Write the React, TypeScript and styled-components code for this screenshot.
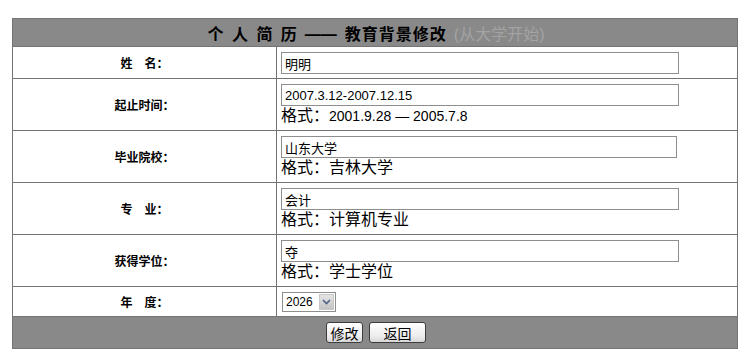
import styled, { createGlobalStyle } from 'styled-components'

const GlobalStyle = createGlobalStyle`
  body {
    margin: 0;
    background: #ffffff;
    font-family: "Liberation Sans", "Noto Sans CJK SC", sans-serif;
  }
`

const Page = styled.div`
  padding: 18px 0 0 12px;
`

const Table = styled.table`
  width: 726px;
  border-collapse: collapse;
  border: 1px solid #747474;
`

const HeadCell = styled.th`
  height: 27px;
  padding: 0 0 0 2px;
  background: #898989;
  border: 1px solid #747474;
  font-size: 16px;
  font-weight: bold;
  color: #000;
  text-align: center;
  letter-spacing: 1px;
  word-spacing: 2px;
  white-space: pre;
`

const Dash = styled.span`
  margin: 0 8px 0 7px;
  letter-spacing: 0;
`

const SubTitle = styled.span`
  color: #a3a3a3;
  font-weight: normal;
  margin-left: 7px;
  letter-spacing: 0;
`

const Label = styled.td`
  width: 263px;
  padding: 0;
  border: 1px solid #747474;
  text-align: center;
  font-size: 12px;
  font-weight: bold;
  color: #000;
`

const Field = styled.td`
  padding: 5px 4px 4px 4px;
  border: 1px solid #747474;
  vertical-align: top;
`

const TextInput = styled.input<{ $w: number }>`
  display: block;
  box-sizing: border-box;
  width: ${p => p.$w}px;
  height: 22px;
  margin: 0;
  padding: 0 3px;
  border: 1px solid #8e8e8e;
  font-family: "Liberation Sans", "Noto Sans CJK SC", sans-serif;
  font-size: 13px;
  color: #000;
  outline: none;
`

const Hint = styled.div`
  font-size: 16px;
  line-height: 20px;
  color: #000;
  white-space: nowrap;
`

const HintNum = styled.span`
  font-size: 14px;
`

const SelectWrap = styled.div`
  position: relative;
  display: inline-block;
  width: 54px;
  height: 20px;
  margin-left: 1px;
`

const YearSelect = styled.select`
  appearance: none;
  box-sizing: border-box;
  width: 54px;
  height: 20px;
  margin: 0;
  padding: 0 0 0 3px;
  border: 1px solid #8e8e8e;
  background: #fff;
  font-family: "Liberation Sans", sans-serif;
  font-size: 12px;
  color: #000;
`

const Arrow = styled.span`
  position: absolute;
  top: 2px;
  right: 2px;
  width: 15px;
  height: 16px;
  background: linear-gradient(#e4e4e4, #c4c4c4);
  border: 1px solid #c8c8c8;
  box-sizing: border-box;
  display: flex;
  align-items: center;
  justify-content: center;
  pointer-events: none;
`

const FootCell = styled.td`
  height: 31px;
  padding: 0 0 0 2px;
  background: #898989;
  border: 1px solid #747474;
`

const Buttons = styled.div`
  display: flex;
  justify-content: center;
  gap: 6px;
`

const Button = styled.button<{ $w: number }>`
  box-sizing: border-box;
  width: ${p => p.$w}px;
  height: 21px;
  padding: 0;
  border: 1px solid #3c3c3c;
  border-radius: 3px;
  background: linear-gradient(#ffffff, #ececec 70%, #d6d6d6);
  font-family: "Noto Sans CJK SC", sans-serif;
  font-size: 14px;
  line-height: 18px;
  color: #000;
`

const rows = [
  { label: '起止时间：', value: '2007.3.12-2007.12.15', hint: '2001.9.28 — 2005.7.8', num: true, w: 398 },
  { label: '毕业院校：', value: '山东大学', hint: '吉林大学', num: false, w: 396 },
  { label: '专　业：', value: '会计', hint: '计算机专业', num: false, w: 398 },
  { label: '获得学位：', value: '夺', hint: '学士学位', num: false, w: 398 },
]

export default function App() {
  return (
    <Page>
      <GlobalStyle />
      <Table>
        <tbody>
          <tr>
            <HeadCell colSpan={2}>
              个 人 简 历<Dash>——</Dash>教育背景修改<SubTitle>(从大学开始)</SubTitle>
            </HeadCell>
          </tr>
          <tr>
            <Label>姓　名：</Label>
            <Field>
              <TextInput $w={398} defaultValue="明明" />
            </Field>
          </tr>
          {rows.map(r => (
            <tr key={r.label}>
              <Label>{r.label}</Label>
              <Field>
                <TextInput $w={r.w} defaultValue={r.value} />
                <Hint>
                  格式：{r.num ? <HintNum>{r.hint}</HintNum> : r.hint}
                </Hint>
              </Field>
            </tr>
          ))}
          <tr>
            <Label>年　度：</Label>
            <Field>
              <SelectWrap>
                <YearSelect defaultValue="2026">
                  <option value="2026">2026</option>
                </YearSelect>
                <Arrow>
                  <svg width="9" height="6" viewBox="0 0 9 6">
                    <path d="M1 1 L4.5 4.5 L8 1" stroke="#4d6185" strokeWidth="1.6" fill="none" />
                  </svg>
                </Arrow>
              </SelectWrap>
            </Field>
          </tr>
          <tr>
            <FootCell colSpan={2}>
              <Buttons>
                <Button $w={37}>修改</Button>
                <Button $w={57}>返回</Button>
              </Buttons>
            </FootCell>
          </tr>
        </tbody>
      </Table>
    </Page>
  )
}
